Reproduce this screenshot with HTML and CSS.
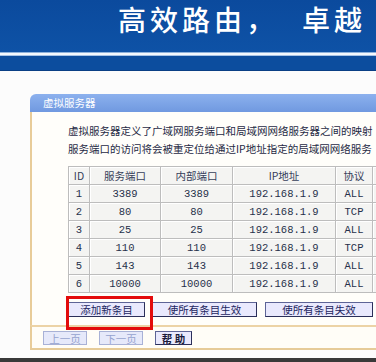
FILE: index.html
```html
<!DOCTYPE html>
<html lang="zh-CN">
<head>
  <meta charset="UTF-8" />
  <meta name="viewport" content="width=device-width, initial-scale=1.0" />
  <title>虚拟服务器</title>
  <link rel="stylesheet" href="styles.css">
</head>
<body>
  <header class="banner">
    <h1 class="slogan">高效路由，<span class="slogan-tail">卓越</span></h1>
  </header>
  <div class="rule"></div>
  <div class="band"></div>

  <main class="content">
    <section class="panel">
      <div class="panel-head">虚拟服务器</div>
      <div class="panel-body">
        <p class="desc">虚拟服务器定义了广域网服务端口和局域网网络服务器之间的映射<br>服务端口的访问将会被重定位给通过IP地址指定的局域网网络服务</p>
        <table class="rules">
          <colgroup>
            <col class="c-id"><col class="c-port"><col class="c-port2"><col class="c-ip"><col class="c-proto"><col class="c-state">
          </colgroup>
          <tr><th>ID</th><th>服务端口</th><th>内部端口</th><th>IP地址</th><th>协议</th><th></th></tr>
          <tr><td>1</td><td>3389</td><td>3389</td><td>192.168.1.9</td><td>ALL</td><td></td></tr>
          <tr><td>2</td><td>80</td><td>80</td><td>192.168.1.9</td><td>TCP</td><td></td></tr>
          <tr><td>3</td><td>25</td><td>25</td><td>192.168.1.9</td><td>ALL</td><td></td></tr>
          <tr><td>4</td><td>110</td><td>110</td><td>192.168.1.9</td><td>TCP</td><td></td></tr>
          <tr><td>5</td><td>143</td><td>143</td><td>192.168.1.9</td><td>ALL</td><td></td></tr>
          <tr><td>6</td><td>10000</td><td>10000</td><td>192.168.1.9</td><td>ALL</td><td></td></tr>
        </table>
        <div class="actions">
          <button class="btn btn-add">添加新条目</button>
          <button class="btn btn-on">使所有条目生效</button>
          <button class="btn btn-off">使所有条目失效</button>
          <span class="mark"></span>
        </div>
      </div>
      <div class="panel-foot">
        <button class="btn nav" disabled>上一页</button>
        <button class="btn nav" disabled>下一页</button>
        <button class="btn help">帮 助</button>
      </div>
    </section>
  </main>
  <div class="bottom-bar"></div>
</body>
</html>
```

FILE: styles.css
```css
html, body {
  margin: 0;
  padding: 0;
  overflow: hidden;
}
body {
  width: 376px;
  font-family: "Noto Sans CJK SC", "Noto Sans", sans-serif;
  background: #fcfcfc;
  color: #222;
}
.banner {
  height: 52px;
  background: linear-gradient(180deg, #0b4a9d, #0e52a6);
  padding-left: 118px;
  box-sizing: border-box;
}
.slogan {
  margin: 0;
  font-size: 28px;
  line-height: 38px;
  font-weight: 500;
  letter-spacing: 4px;
  color: #fff;
  white-space: nowrap;
}
.slogan-tail {
  margin-left: 24px;
}
.rule {
  height: 2px;
  background: #f4f8fd;
  border-top: 1px solid #8fb2dc;
  border-bottom: 1px solid #a9c4e6;
}
.band {
  height: 14px;
  background: #0c4d9e;
  border-bottom: 1px solid #0a3f85;
}
.content {
  padding: 23px 0 8px 30px;
}
.panel {
  width: 420px;
}
.panel-head {
  height: 18px;
  line-height: 18px;
  padding-left: 13px;
  font-size: 10.5px;
  color: #fff;
  background: linear-gradient(180deg, #8cb1ee, #7099e0);
  border-top-left-radius: 6px;
}
.panel-body {
  background: #fffefa;
  border-left: 2px solid #e8cc99;
  padding-left: 36px;
}
.desc {
  margin: 0;
  padding-top: 10px;
  font-size: 10.5px;
  line-height: 18px;
  color: #1f2a44;
  white-space: nowrap;
}
.rules {
  margin-top: 8px;
  border-collapse: collapse;
  table-layout: fixed;
  width: 344px;
  font-family: "Liberation Mono", "Noto Sans CJK SC", monospace;
  font-size: 10.5px;
  color: #26304a;
}
.c-id { width: 21px; }
.c-port { width: 71px; }
.c-port2 { width: 72px; }
.c-ip { width: 103px; }
.c-proto { width: 37px; }
.c-state { width: 40px; }
.rules th, .rules td {
  height: 17px;
  padding: 0;
  text-align: center;
  font-weight: normal;
  border: 1px solid #bdbdbd;
  background: #f4f4f2;
  box-shadow: inset 1px 1px 0 #fff;
}
.rules th {
  font-family: "Noto Sans CJK SC", sans-serif;
  color: #36405a;
}
.actions {
  position: relative;
  display: flex;
  gap: 7px;
  padding: 9px 0 8px;
}
.btn {
  height: 15px;
  padding: 0;
  font-family: "Noto Sans CJK SC", sans-serif;
  font-size: 10.5px;
  line-height: 13px;
  color: #1d2660;
  background: #e9e9fd;
  border: 1px solid #5d6496;
  border-right-color: #2b2f5a;
  border-bottom-color: #2b2f5a;
}
.btn-add { width: 77px; }
.btn-on { width: 105px; }
.btn-off { width: 108px; margin-left: 1px; }
.mark {
  position: absolute;
  left: -2px;
  top: 3px;
  width: 81px;
  height: 28px;
  border: 3px solid #e30b0b;
}
.panel-foot {
  display: flex;
  gap: 12px;
  padding: 4px 0 3px 11px;
  background: #fffdf7;
  border-left: 2px solid #e8cc99;
  border-top: 2px solid #ecd3a6;
  border-bottom: 2px solid #e6cb98;
}
.nav {
  width: 44px;
  height: 14px;
  color: #95a2cf;
  background: #e6e9fa;
  border-color: #a8b1d6;
}
.help {
  width: 37px;
  height: 14px;
  font-weight: bold;
  color: #1a1a3a;
}
.bottom-bar {
  height: 6px;
  background: #393939;
}
```
